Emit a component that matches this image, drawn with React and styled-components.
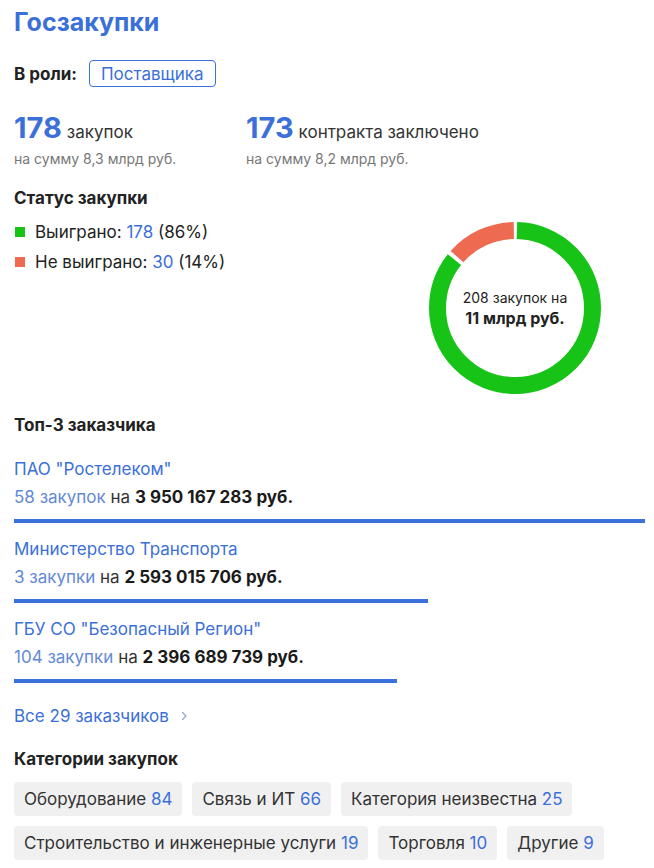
import styled, { createGlobalStyle } from "styled-components";

const GlobalStyle = createGlobalStyle`
  body {
    margin: 0;
    background: #ffffff;
    font-family: Inter, "Noto Sans", sans-serif;
    color: #222222;
  }
`;

const BLUE = "#3b6fd9";
const GREEN = "#17c317";
const RED = "#ee6b52";

const customers = [
  { name: 'ПАО "Ростелеком"', count: "58 закупок", sum: 3950167283 },
  { name: "Министерство Транспорта", count: "3 закупки", sum: 2593015706 },
  { name: 'ГБУ СО "Безопасный Регион"', count: "104 закупки", sum: 2396689739 },
];

const categories = [
  [
    { label: "Оборудование", value: 84 },
    { label: "Связь и ИТ", value: 66 },
    { label: "Категория неизвестна", value: 25 },
  ],
  [
    { label: "Строительство и инженерные услуги", value: 19 },
    { label: "Торговля", value: 10 },
    { label: "Другие", value: 9 },
  ],
];

const formatRub = (n) => n.toLocaleString("ru-RU").replace(/\s/g, " ");

const Donut = () => {
  const size = 172;
  const stroke = 17;
  const r = (size - stroke) / 2;
  const c = 2 * Math.PI * r;
  const gap = 4;
  const won = 0.86 * c;
  return (
    <svg width={size} height={size} viewBox={`0 0 ${size} ${size}`}>
      <g transform={`rotate(-90 ${size / 2} ${size / 2})`}>
        <circle
          cx={size / 2}
          cy={size / 2}
          r={r}
          fill="none"
          stroke={GREEN}
          strokeWidth={stroke}
          strokeDasharray={`${won - gap} ${c}`}
          strokeDashoffset={-gap / 2}
        />
        <circle
          cx={size / 2}
          cy={size / 2}
          r={r}
          fill="none"
          stroke={RED}
          strokeWidth={stroke}
          strokeDasharray={`${c - won - gap} ${c}`}
          strokeDashoffset={-(won + gap / 2)}
        />
      </g>
    </svg>
  );
};

const App = () => {
  const max = customers[0].sum;
  return (
    <Wrapper>
      <GlobalStyle />
      <Title>Госзакупки</Title>

      <RoleRow>
        <RoleLabel>В роли:</RoleLabel>
        <RoleButton>Поставщика</RoleButton>
      </RoleRow>

      <Stats>
        <Stat>
          <StatMain>
            <BigNum>178</BigNum>
            <StatLabel>закупок</StatLabel>
          </StatMain>
          <StatSub>на сумму 8,3 млрд руб.</StatSub>
        </Stat>
        <Stat>
          <StatMain>
            <BigNum>173</BigNum>
            <StatLabel>контракта заключено</StatLabel>
          </StatMain>
          <StatSub>на сумму 8,2 млрд руб.</StatSub>
        </Stat>
      </Stats>

      <SectionTitle>Статус закупки</SectionTitle>
      <StatusRow>
        <Legend>
          <LegendItem>
            <Dot $color={GREEN} />
            <span>
              Выиграно: <Num>178</Num> (86%)
            </span>
          </LegendItem>
          <LegendItem>
            <Dot $color={RED} />
            <span>
              Не выиграно: <Num>30</Num> (14%)
            </span>
          </LegendItem>
        </Legend>
        <DonutBox>
          <Donut />
          <DonutText>
            <span>208 закупок на</span>
            <strong>11 млрд руб.</strong>
          </DonutText>
        </DonutBox>
      </StatusRow>

      <SectionTitle $top={21}>Топ-3 заказчика</SectionTitle>
      <Customers>
        {customers.map((c) => (
          <Customer key={c.name}>
            <CustomerName>{c.name}</CustomerName>
            <CustomerSum>
              <Num>{c.count}</Num> на <b>{formatRub(c.sum)} руб.</b>
            </CustomerSum>
            <Bar style={{ width: `${(c.sum / max) * 100}%` }} />
          </Customer>
        ))}
      </Customers>

      <AllLink>
        Все 29 заказчиков
        <svg width="12" height="12" viewBox="0 0 12 12">
          <path
            d="M4.5 2.5 8 6l-3.5 3.5"
            fill="none"
            stroke="#8fa6cf"
            strokeWidth="1.3"
            strokeLinecap="round"
            strokeLinejoin="round"
          />
        </svg>
      </AllLink>

      <SectionTitle $top={22}>Категории закупок</SectionTitle>
      <Chips>
        {categories.map((row, i) => (
          <ChipRow key={i}>
            {row.map((c) => (
              <Chip key={c.label}>
                {c.label} <Num>{c.value}</Num>
              </Chip>
            ))}
          </ChipRow>
        ))}
      </Chips>
    </Wrapper>
  );
};

export default App;

const Wrapper = styled.div`
  padding: 7px 9px 0 14px;
  width: 654px;
  box-sizing: border-box;
`;

const Title = styled.h1`
  margin: 0;
  font-size: 25px;
  line-height: 30px;
  font-weight: 700;
  color: ${BLUE};
`;

const RoleRow = styled.div`
  display: flex;
  align-items: center;
  gap: 12px;
  margin-top: 23px;
`;

const RoleLabel = styled.div`
  font-size: 17px;
  font-weight: 700;
  color: #222;
`;

const RoleButton = styled.div`
  height: 27px;
  box-sizing: border-box;
  padding: 0 11px;
  display: flex;
  align-items: center;
  border: 1px solid ${BLUE};
  border-radius: 4px;
  color: ${BLUE};
  font-size: 17px;
`;

const Stats = styled.div`
  display: grid;
  grid-template-columns: 232px auto;
  margin-top: 25px;
`;

const Stat = styled.div`
  white-space: nowrap;
`;

const StatMain = styled.div`
  display: flex;
  align-items: baseline;
  gap: 5px;
  line-height: 32px;
`;

const BigNum = styled.span`
  font-size: 29px;
  font-weight: 700;
  color: ${BLUE};
`;

const StatLabel = styled.span`
  font-size: 17px;
  color: #333;
`;

const StatSub = styled.div`
  margin-top: 2px;
  font-size: 14px;
  line-height: 18px;
  color: #777;
`;

const SectionTitle = styled.h2`
  margin: ${(p) => p.$top ?? 20}px 0 0;
  font-size: 17px;
  line-height: 20px;
  font-weight: 700;
  color: #222;
`;

const StatusRow = styled.div`
  display: flex;
  justify-content: space-between;
  align-items: flex-start;
  margin-top: 13px;
  padding-right: 44px;
`;

const Legend = styled.div`
  display: flex;
  flex-direction: column;
  gap: 8px;
`;

const LegendItem = styled.div`
  display: flex;
  align-items: center;
  font-size: 17px;
  line-height: 22px;
  color: #222;
`;

const Dot = styled.span`
  width: 10px;
  height: 10px;
  background: ${(p) => p.$color};
  margin: 0 10px 0 1px;
`;

const Num = styled.span`
  color: ${BLUE};
`;

const DonutBox = styled.div`
  position: relative;
  width: 172px;
  height: 172px;
  margin-top: 1px;
`;

const DonutText = styled.div`
  position: absolute;
  inset: 0;
  display: flex;
  flex-direction: column;
  align-items: center;
  justify-content: center;
  font-size: 14px;
  line-height: 21px;
  color: #222;

  strong {
    font-size: 16px;
    font-weight: 700;
  }
`;

const Customers = styled.div`
  display: flex;
  flex-direction: column;
  gap: 15px;
  margin-top: 23px;
`;

const Customer = styled.div`
  display: flex;
  flex-direction: column;
`;

const CustomerName = styled.div`
  font-size: 17px;
  line-height: 22px;
  color: ${BLUE};
`;

const CustomerSum = styled.div`
  margin-top: 6px;
  font-size: 17px;
  line-height: 22px;
  color: #333;

  ${Num} {
    color: #6489d6;
  }

  b {
    font-weight: 700;
    color: #1a1a1a;
  }
`;

const Bar = styled.div`
  height: 4px;
  margin-top: 11px;
  background: ${BLUE};
`;

const AllLink = styled.div`
  display: flex;
  align-items: center;
  gap: 9px;
  margin-top: 22px;
  font-size: 17px;
  line-height: 22px;
  color: ${BLUE};
`;

const Chips = styled.div`
  display: flex;
  flex-direction: column;
  gap: 10px;
  margin-top: 13px;
`;

const ChipRow = styled.div`
  display: flex;
  gap: 10px;
`;

const Chip = styled.div`
  height: 34px;
  box-sizing: border-box;
  padding: 0 10px;
  display: flex;
  align-items: center;
  white-space: pre;
  background: #f0f0f0;
  border-radius: 4px;
  font-size: 17px;
  color: #333;
`;
